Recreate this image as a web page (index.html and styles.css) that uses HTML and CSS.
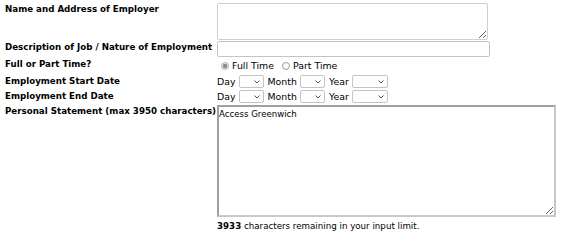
FILE: index.html
```html
<!DOCTYPE html>
<html>
<head>
<meta charset="utf-8">
<link rel="stylesheet" href="styles.css">
</head>
<body>
<form class="form">
  <div class="label">Name and Address of Employer</div>
  <div class="field"><textarea class="ta-small"></textarea></div>

  <div class="label">Description of Job / Nature of Employment</div>
  <div class="field"><input class="text" type="text"></div>

  <div class="label">Full or Part Time?</div>
  <div class="field radios">
    <span class="radio checked"></span><span class="rlabel">Full Time</span>
    <span class="radio"></span><span class="rlabel">Part Time</span>
  </div>

  <div class="label">Employment Start Date</div>
  <div class="field dates">
    <span>Day</span><span class="sel s-day"><svg viewBox="0 0 6 4"><path d="M0.5 0.5 L3 3 L5.5 0.5"/></svg></span>
    <span>Month</span><span class="sel s-mon"><svg viewBox="0 0 6 4"><path d="M0.5 0.5 L3 3 L5.5 0.5"/></svg></span>
    <span>Year</span><span class="sel s-year"><svg viewBox="0 0 6 4"><path d="M0.5 0.5 L3 3 L5.5 0.5"/></svg></span>
  </div>

  <div class="label">Employment End Date</div>
  <div class="field dates">
    <span>Day</span><span class="sel s-day"><svg viewBox="0 0 6 4"><path d="M0.5 0.5 L3 3 L5.5 0.5"/></svg></span>
    <span>Month</span><span class="sel s-mon"><svg viewBox="0 0 6 4"><path d="M0.5 0.5 L3 3 L5.5 0.5"/></svg></span>
    <span>Year</span><span class="sel s-year"><svg viewBox="0 0 6 4"><path d="M0.5 0.5 L3 3 L5.5 0.5"/></svg></span>
  </div>

  <div class="label">Personal Statement (max 3950 characters)</div>
  <div class="field"><textarea class="ta-big">Access Greenwich</textarea></div>

  <div class="label"></div>
  <div class="remaining"><b>3933</b> characters remaining in your input limit.</div>
</form>
</body>
</html>
```

FILE: styles.css
```css
html, body {
  margin: 0;
  padding: 0;
  background: #fff;
}
body {
  font-family: "DejaVu Sans", Verdana, sans-serif;
  color: #000;
}
.form {
  display: grid;
  grid-template-columns: 212px 1fr;
  grid-template-rows: 38px 17px 17px 15px 15px 112px auto;
  padding: 3px 0 0 5px;
}
.label {
  font-weight: bold;
  font-size: 8.7px;
  line-height: 11px;
  padding-top: 1px;
  white-space: nowrap;
}
.field {
  font-size: 9.4px;
  line-height: 11px;
  display: flex;
  align-items: center;
  align-self: start;
}
textarea {
  box-sizing: border-box;
  margin: 0;
  font-family: "DejaVu Sans", Verdana, sans-serif;
  font-size: 8.6px;
  line-height: 11px;
  color: #000;
  background: #fff;
  outline: none;
}
.ta-small {
  width: 271px;
  height: 37px;
  border: 1px solid #cfcfcf;
  border-radius: 2px;
  padding: 2px 3px;
}
.ta-big {
  width: 339px;
  height: 112px;
  border: 2px solid #a0a0a0;
  border-right-color: #c8c8c8;
  border-bottom-color: #c8c8c8;
  padding: 2px 0 0 0;
}
.text {
  box-sizing: border-box;
  width: 273px;
  height: 16px;
  margin: 0;
  border: 1px solid #c4c4c4;
  border-radius: 2px;
  padding: 0 2px;
}
.radios {
  height: 15px;
}
.radio {
  box-sizing: border-box;
  width: 8px;
  height: 8px;
  border-radius: 50%;
  border: 1px solid #9a9a9a;
  margin: 0 3px 0 4px;
  background: #fff;
}
.radio.checked {
  border-color: #b5b5b5;
  background: radial-gradient(circle, #8a8a8a 0 2px, #e2e2e2 2.3px);
}
.rlabel + .radio {
  margin-left: 8px;
}
.dates {
  height: 13px;
}
.sel {
  box-sizing: border-box;
  height: 13px;
  border: 1px solid #c4c4c4;
  border-radius: 2px;
  margin: 0 4px 0 3px;
  display: inline-flex;
  align-items: center;
  justify-content: flex-end;
  padding-right: 3px;
  background: #fff;
}
.sel svg {
  width: 6px;
  height: 4px;
  fill: none;
  stroke: #555;
  stroke-width: 1;
}
.s-day { width: 25px; }
.s-mon { width: 25px; }
.s-year { width: 36px; }
.remaining {
  font-size: 8.7px;
  line-height: 11px;
  padding-top: 4px;
  white-space: nowrap;
}
```
